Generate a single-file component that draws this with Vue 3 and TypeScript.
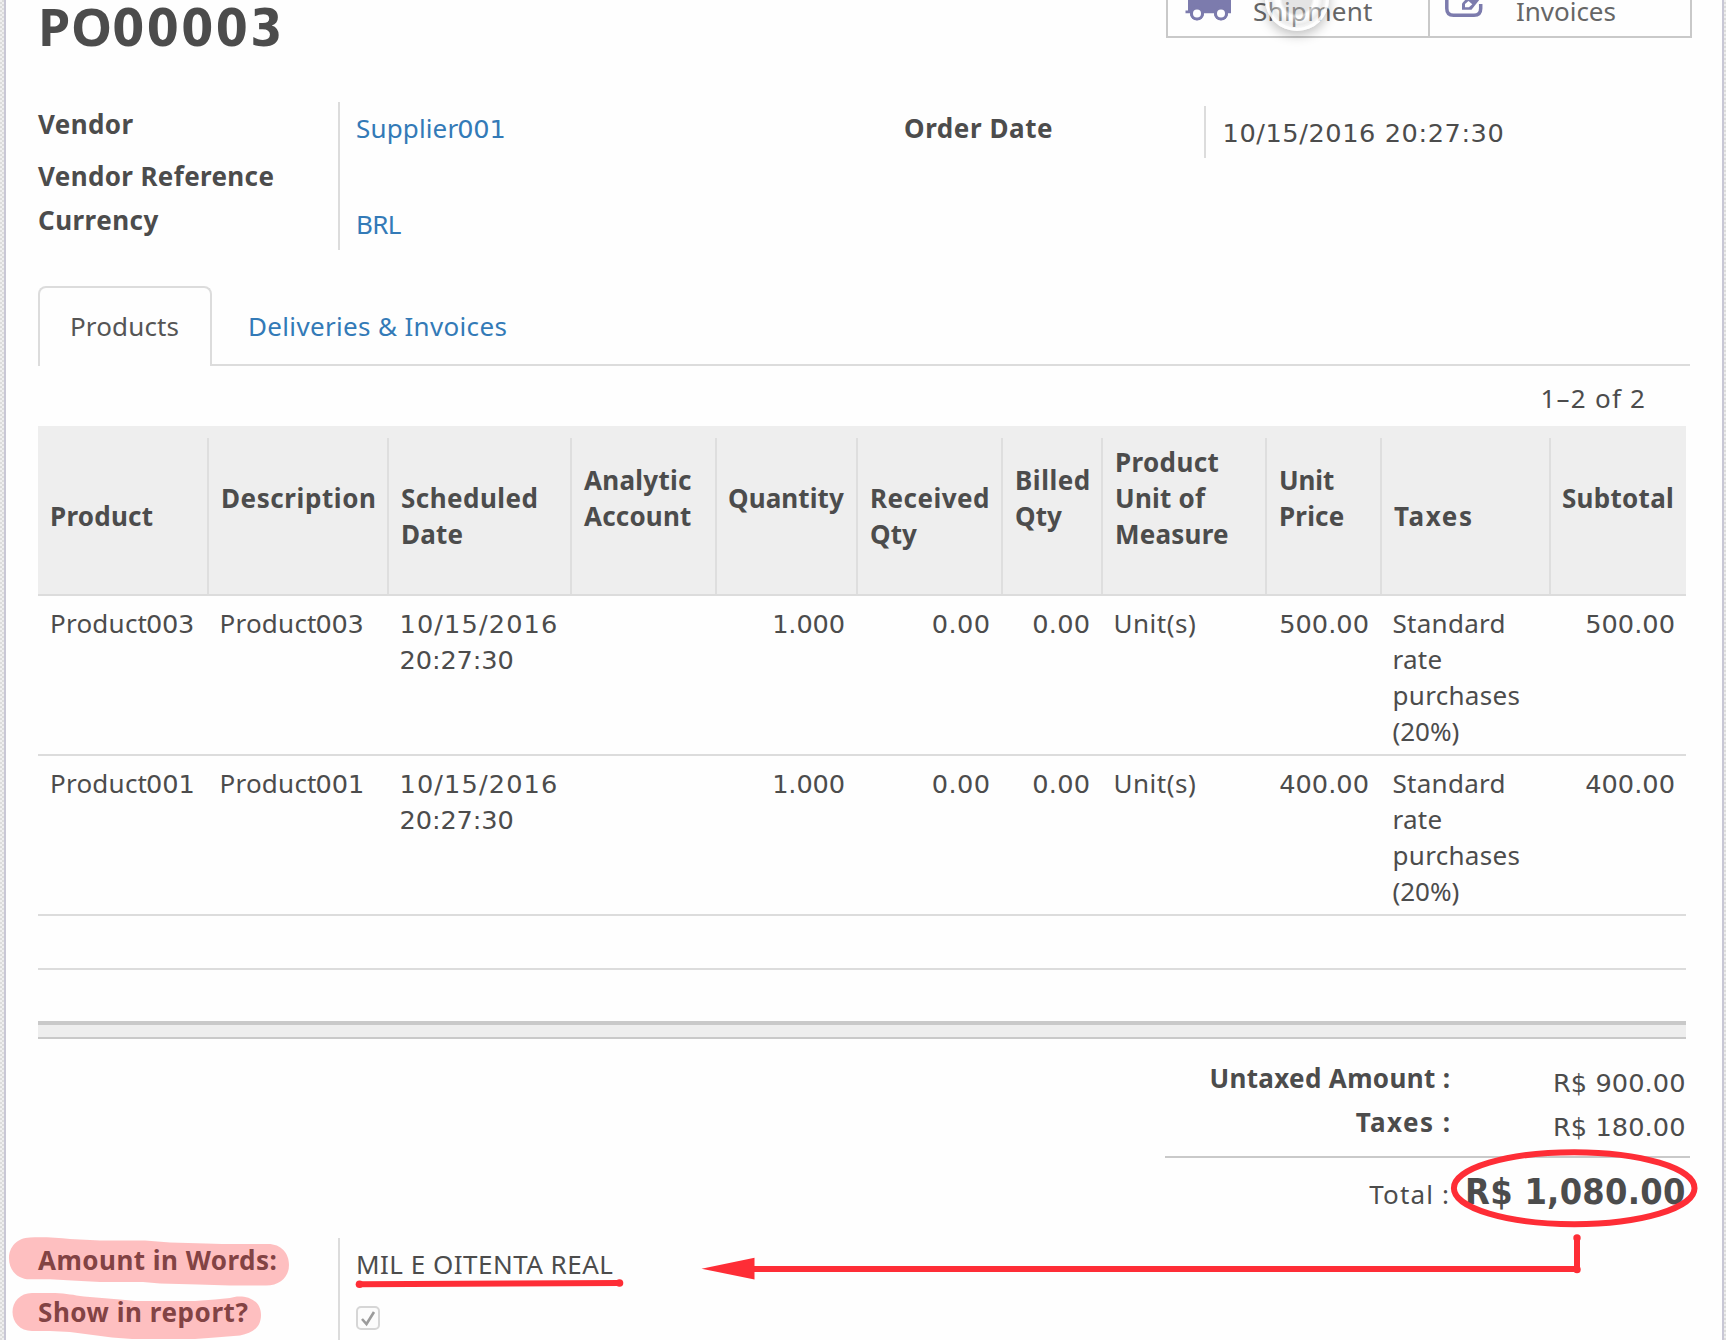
<script setup lang="ts">
import type { ObjectDirective } from 'vue'

type Run = [text: string, width: number]
type Line = Run[]
interface Column { label: Run[]; top: number; numeric?: boolean }

// Tracks a single run of text out to the given printed width.
const vFit: ObjectDirective<HTMLElement, number> = {
  mounted(el, { value }) {
    const text = el.textContent ?? ''
    const ctx = document.createElement('canvas').getContext('2d')
    if (!ctx || text.length < 2) return
    const style = getComputedStyle(el)
    ctx.font = `${style.fontWeight} ${style.fontSize} ${style.fontFamily}`
    const m = ctx.measureText(text)
    const ink = m.actualBoundingBoxRight + m.actualBoundingBoxLeft
    const spacing = (value - ink) / (text.length - 1)
    el.style.letterSpacing = `${spacing}px`
    el.style.marginRight = `${-spacing}px`
  },
}

const isNumber = (text: string) => /^[\d.,:/ ]+$/.test(text)

const columns: Column[] = [
  { label: [['Product', 100.7]], top: 72 },
  { label: [['Description', 152]], top: 54 },
  { label: [['Scheduled', 134.6], ['Date', 59.5]], top: 54 },
  { label: [['Analytic', 107], ['Account', 107]], top: 36 },
  { label: [['Quantity', 115]], top: 54, numeric: true },
  { label: [['Received', 116], ['Qty', 46]], top: 54, numeric: true },
  { label: [['Billed', 71.8], ['Qty', 46]], top: 36, numeric: true },
  { label: [['Product', 101.5], ['Unit of', 90], ['Measure', 111]], top: 18 },
  { label: [['Unit', 53], ['Price', 62.7]], top: 36, numeric: true },
  { label: [['Taxes', 77]], top: 72 },
  { label: [['Subtotal', 109]], top: 54, numeric: true },
]

const line = (code: string, price: string): Line[][] => [
  [[['Product', 94.6], [code, code.endsWith('1') ? 45.4 : 46]]],
  [[['Product', 94.6], [code, code.endsWith('1') ? 45.4 : 46]]],
  [[['10/15/2016', 154.5]], [['20:27:30', 112]]],
  [],
  [[['1.000', 69.5]]],
  [[['0.00', 56]]],
  [[['0.00', 55.5]]],
  [[['Unit(s)', 79.5]]],
  [[[price, 87.5]]],
  [[['Standard', 110]], [['rate', 47]], [['purchases', 125]], [['(20%)', 65]]],
  [[[price, 87.5]]],
]

const rows: Line[][][] = [line('003', '500.00'), line('001', '400.00')]
</script>

<template>
  <div class="page">
    <main class="sheet">
      <header class="head">
        <h1><span v-fit="68">PO</span><span v-fit="165" class="digits">00003</span></h1>
        <div class="stats">
          <div class="stat">
            <svg class="truck" width="50" height="22" viewBox="0 0 50 22">
              <path d="M5 0H48V13.300H45A7 7 0 0 1 31 13.300H21A7 7 0 0 1 7 13.300H2.500V10.500H5Z" fill="#7c7bad" />
              <circle cx="14" cy="13.500" r="7" fill="#7c7bad" />
              <circle cx="38" cy="13.500" r="7" fill="#7c7bad" />
              <circle cx="14" cy="13.500" r="4" fill="#fff" />
              <circle cx="38" cy="13.500" r="4" fill="#fff" />
            </svg>
            <span class="stat-label"><span v-fit="118">Shipment</span></span>
          </div>
          <div class="stat">
            <svg class="edit" width="42" height="20" viewBox="0 0 42 20">
              <path d="M3.800 -2V8.500Q3.800 15.200 10.500 15.200H31Q37.700 15.200 37.700 8.500V4" fill="none" stroke="#7c7bad" stroke-width="3.500" />
              <path d="M19 9.800V3.500L23 -1H37L28.500 9.800Z" fill="#7c7bad" />
              <path d="M22 7.200V4L25.500 1L29.300 4.200L26 7.200Z" fill="#fff" />
            </svg>
            <span class="stat-label"><span v-fit="98.500">Invoices</span></span>
          </div>
        </div>
      </header>

      <section class="groups">
        <div class="labels left">
          <b v-fit="95.4">Vendor</b>
          <b v-fit="235.400">Vendor Reference</b>
          <b v-fit="119.400">Currency</b>
        </div>
        <div class="values vendor">
          <a><span v-fit="101.400">Supplier</span><span v-fit="45.400" class="digits">001</span></a>
          <a v-fit="42.700">BRL</a>
        </div>
        <div class="labels right"><b v-fit="147">Order Date</b></div>
        <div class="values date">
          <div><span v-fit="278" class="digits">10/15/2016 20:27:30</span></div>
        </div>
      </section>

      <nav class="tabs">
        <div class="tab active"><span v-fit="106.500">Products</span></div>
        <div class="tab"><a v-fit="256.400">Deliveries &amp; Invoices</a></div>
      </nav>

      <div class="pager"><span v-fit="101.700">1–2 of 2</span></div>

      <div class="table">
        <div class="row thead">
          <div v-for="(c, i) in columns" :key="i" class="th" :style="{ paddingTop: c.top - 12 + 'px' }">
            <b v-for="([text, w], j) in c.label" :key="j" v-fit="w">{{ text }}</b>
          </div>
        </div>
        <div v-for="(r, i) in rows" :key="i" class="row data">
          <div v-for="(cell, j) in r" :key="j" class="td" :class="{ num: columns[j].numeric }">
            <div v-for="(runs, k) in cell" :key="k" class="line">
              <span v-for="([text, w], n) in runs" :key="n" v-fit="w" :class="{ digits: isNumber(text) }">{{ text }}</span>
            </div>
          </div>
        </div>
        <div class="blank ruled"></div>
        <div class="blank"></div>
        <div class="tfoot"></div>
      </div>

      <section class="totals">
        <div class="sum">
          <b v-fit="237.300">Untaxed Amount :</b>
          <div class="amount"><span v-fit="129.300" class="digits">R$ 900.00</span></div>
        </div>
        <div class="sum">
          <b v-fit="93">Taxes :</b>
          <div class="amount"><span v-fit="129.300" class="digits">R$ 180.00</span></div>
        </div>
        <div class="sum total">
          <span class="total-label"><span v-fit="78.700">Total :</span></span>
          <div class="amount big"><b v-fit="217" class="digits">R$ 1,080.00</b></div>
        </div>
      </section>

      <section class="extra">
        <div class="labels left">
          <b v-fit="237.500">Amount in Words:</b>
          <b v-fit="208.400">Show in report?</b>
        </div>
        <div class="values words">
          <span v-fit="254.300">MIL E OITENTA REAL</span>
          <div class="check">
            <svg width="24" height="24" viewBox="0 0 24 24">
              <path d="M6 13L10.500 18L18 6" fill="none" stroke="#9b9b9b" stroke-width="2.600" />
            </svg>
          </div>
        </div>
      </section>
    </main>

    <div class="spinner"></div>

    <svg class="marks" width="1726" height="1340" viewBox="0 0 1726 1340">
      <g fill="#fe2d32" fill-opacity="0.3">
        <path d="M30 1237.500C42 1237 57 1237.500 70 1239L100 1240.500H145L170 1242.500L206 1243.500L222 1244H268C281 1244 289 1253 289 1265C289 1277 280 1285.500 266 1285.500H230L198 1284.500L160 1283.500L143 1282H100L72 1280.500L50 1279.300H30C17 1279.300 9 1270 9 1258.500C9 1247 17 1237.800 30 1237.500Z" />
        <path d="M32 1293H55C67 1293.500 73 1295 84 1296.500L120 1299.500L135 1301H195L215 1299.500L230 1298C241 1294 261 1297 261 1315C261 1328 252 1333 240 1335.500L215 1337.500L195 1339H132L112 1337.500L70 1332L50 1331H32C20 1331 12.500 1322 12.500 1312C12.500 1302 20 1293 32 1293Z" />
      </g>
      <g fill="none" stroke="#fe2d36" stroke-width="6">
        <ellipse cx="1574.200" cy="1188.200" rx="120.300" ry="36" />
        <path d="M1577 1238V1269H752" />
        <path d="M360 1284.300L621 1283" />
      </g>
      <g fill="#fe2d36">
        <path d="M701.500 1268.700L754.500 1257.700V1279.500Z" />
        <circle cx="1577" cy="1238" r="3.700" />
        <circle cx="1577" cy="1269.500" r="3.700" />
        <circle cx="359.500" cy="1284.300" r="3.800" />
        <circle cx="619.500" cy="1283" r="3.800" />
      </g>
    </svg>
  </div>
</template>

<style>
body { margin: 0; }
</style>

<style scoped>
.page {
  position: relative;
  width: 1726px;
  height: 1340px;
  overflow: hidden;
  box-sizing: border-box;
  padding: 0 2px 0 4px;
  background: repeating-conic-gradient(#dcdcdc 0 25%, #efefef 0 50%) 0 0 / 4px 4px;
  font: 26px/36px "Noto Sans", "Open Sans", sans-serif;
  color: #4c4c4c;
}
.page * { box-sizing: border-box; }
.sheet {
  height: 1340px;
  padding: 0 32px;
  background: #fefefe;
  border: solid #c8c7d5;
  border-width: 0 2px;
}
span, b, a, .line { white-space: nowrap; }
b { font-weight: 700; }
a { color: #337ab7; }
.digits { font-family: "DejaVu Sans", sans-serif; font-size: 0.985em; line-height: 1; }
h1 .digits, b.digits { font-family: "DejaVu Sans Condensed", "DejaVu Sans", sans-serif; }
.line span + .digits, a span + .digits { margin-left: -1px; }

.head { display: flex; justify-content: space-between; height: 102px; }
h1 { margin: -10px 0 0; font-size: 52px; line-height: 72px; height: 72px; }
.stats {
  display: flex;
  width: 526px;
  height: 38px;
  margin-right: -2px;
  border: solid #c9c9c9;
  border-width: 0 2px 2px;
  color: #666;
}
.stat { display: flex; width: 260px; }
.stat + .stat { width: 262px; border-left: 2px solid #c9c9c9; }
.truck { margin-left: 15px; }
.edit { margin-left: 13px; }
.stat-label { height: 36px; margin-top: -7px; padding-left: 20px; }
.stat + .stat .stat-label { padding-left: 31px; }

.groups { display: flex; height: 148px; }
.labels, .values { display: flex; flex-direction: column; align-items: flex-start; }
.labels.left { width: 300px; padding-top: 4px; }
.labels.left b:nth-child(2) { margin-top: 16px; }
.labels.left b:nth-child(3) { margin-top: 8px; }
.values { border-left: 2px solid #dcdcdc; padding-left: 16px; }
.vendor { width: 566px; padding-top: 8px; gap: 60px; }
.labels.right { width: 300px; padding-top: 8px; }
.date { height: 52px; margin-top: 4px; padding: 8px 0 0 16.500px; }

.tabs { display: flex; height: 80px; margin-top: 36px; border-bottom: 2px solid #dcdcdc; }
.tab { height: 80px; padding: 22px 0 0 36px; }
.tab.active {
  width: 174px;
  padding: 20px 0 0 30px;
  background: #fefefe;
  border: 2px solid #dcdcdc;
  border-bottom: 0;
  border-radius: 8px 8px 0 0;
  color: #555;
}
.pager { display: flex; justify-content: flex-end; height: 60px; padding: 14px 45px 0 0; }

.table { width: 1648px; }
.row {
  display: grid;
  grid-template-columns: 169px 180px 183px 145px 141px 145px 100px 164px 115px 169px 137px;
  border-bottom: 2px solid #dcdcdc;
}
.thead { height: 170px; padding-top: 12px; background: #eee; }
.th, .td { display: flex; flex-direction: column; align-items: flex-start; min-width: 0; padding-left: 12px; }
.th + .th { border-left: 2px solid #dedede; }
.th:nth-child(5), .th:nth-child(11) { padding-left: 11px; }
.data { height: 160px; padding-top: 9px; }
.td + .td { padding-left: 12.500px; }
.line { height: 36px; }
.td.num { align-items: flex-end; padding: 0 11px 0 0; }
.blank { height: 53px; }
.blank.ruled { height: 54px; border-bottom: 2px solid #dcdcdc; }
.blank.ruled + .blank { height: 51px; }
.tfoot { height: 18px; background: #eee; border-top: 4px solid #c9c9c9; border-bottom: 2px solid #c9c9c9; }

.totals { width: 525px; margin: 21px 0 0 auto; }
.sum { display: grid; grid-template-columns: 285px 235.500px; height: 44px; justify-items: end; align-items: start; }
.amount { height: 36px; margin-top: 4px; white-space: nowrap; }
.total { height: 82px; margin-top: 8px; border-top: 2px solid #c9c9c9; }
.total-label { margin: 18px 1px 0 0; }
.big { height: 50px; margin-top: 7px; font-size: 36.400px; line-height: 50px; }

.extra { display: flex; height: 102px; }
.words { width: 300px; padding-top: 8px; }
.check {
  width: 24px;
  height: 24px;
  margin-top: 24px;
  border: 2px solid #d6d6d6;
  border-radius: 5px;
  background: #fcfcfc;
}
.check svg { display: block; margin: -2px; }

.spinner {
  position: absolute;
  left: 1265px;
  top: -33px;
  width: 64px;
  height: 64px;
  border-radius: 50%;
  border: 3px solid rgba(255, 255, 255, 0.8);
  background: radial-gradient(circle closest-side, rgba(190, 190, 190, 0.4) 0 50%, rgba(255, 255, 255, 0.65) 60%, rgba(255, 255, 255, 0.4) 72%, rgba(200, 200, 200, 0.35) 88%, rgba(230, 230, 230, 0.3) 100%);
  box-shadow: 0 4px 12px rgba(0, 0, 0, 0.25);
}
.marks { position: absolute; left: 0; top: 0; pointer-events: none; }
</style>
